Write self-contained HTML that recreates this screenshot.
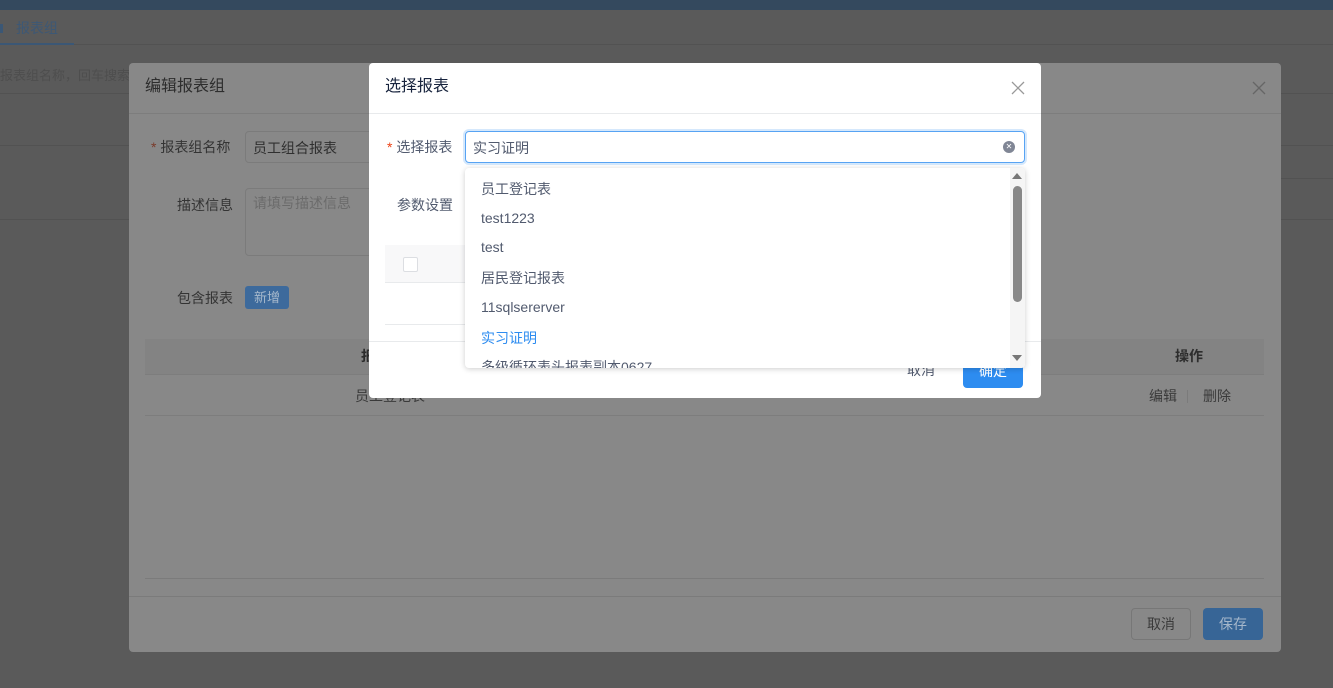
<!DOCTYPE html>
<html><head><meta charset="utf-8"><style>
*{box-sizing:border-box;margin:0;padding:0}
body{width:1333px;height:688px;overflow:hidden;background:#5a5a5a;font-family:"Liberation Sans","Noto Sans CJK SC",sans-serif;font-size:14px;position:relative;line-height:1.15}
.a{position:absolute}
</style></head><body>
<div class="a" style="left:0;top:0;width:1333px;height:10px;background:#34495e"></div>
<div class="a" style="left:0;top:44px;width:1333px;height:1px;background:#525252"></div>
<div class="a" style="left:0;top:43px;width:74px;height:2px;background:#3b5775"></div>
<div class="a" style="left:0;top:24px;width:3px;height:9px;background:#3b5775"></div>
<div class="a" style="left:16px;top:20px;color:#3d5875;font-size:14px">报表组</div>
<div class="a" style="left:0;top:69px;color:#4e4e4e;font-size:13px">报表组名称，回车搜索</div>
<div class="a" style="left:0;top:93px;width:1333px;height:1px;background:#525252"></div>
<div class="a" style="left:0;top:145px;width:1333px;height:1px;background:#525252"></div>
<div class="a" style="left:1281px;top:178px;width:52px;height:1px;background:#525252"></div>
<div class="a" style="left:0;top:219px;width:1333px;height:1px;background:#525252"></div>

<!-- outer dialog -->
<div class="a" style="left:129px;top:63px;width:1152px;height:589px;background:#888;border-radius:4px">
 <div class="a" style="left:16px;top:15px;font-size:16px;color:#2d2d2d">编辑报表组</div>
 <svg class="a" style="left:1123px;top:18px" width="14" height="14"><path d="M1 1L13 13M13 1L1 13" stroke="#666" stroke-width="1.3"/></svg>
 <div class="a" style="left:0;top:50px;width:1152px;height:1px;background:#7d7d7d"></div>
 <div class="a" style="left:22px;top:76px;color:#343434"><span style="color:#7a3a2a">*</span> 报表组名称</div>
 <div class="a" style="left:116px;top:68px;width:250px;height:32px;border:1px solid #7b7b7b;border-radius:4px;padding:8px 7px 0;color:#2f2f2f">员工组合报表</div>
 <div class="a" style="left:48px;top:134px;color:#343434">描述信息</div>
 <div class="a" style="left:116px;top:125px;width:250px;height:68px;border:1px solid #7b7b7b;border-radius:4px;padding:6px 7px;color:#6b6b6b">请填写描述信息</div>
 <div class="a" style="left:48px;top:227px;color:#343434">包含报表</div>
 <div class="a" style="left:116px;top:223px;width:44px;height:23px;background:#3d6a9c;border-radius:3px;color:#a7b9cc;font-size:13px;text-align:center;line-height:23px">新增</div>
 <div class="a" style="left:16px;top:276px;width:1119px;height:36px;background:#838383;border-bottom:1px solid #7d7d7d"></div>
 <div class="a" style="left:232px;top:285px;color:#2d2d2d;font-weight:bold">报</div>
 <div class="a" style="left:1046px;top:285px;color:#2d2d2d;font-weight:bold">操作</div>
 <div class="a" style="left:226px;top:325px;color:#3a3a3a">员工登记表</div>
 <div class="a" style="left:1020px;top:325px;color:#3a3a3a">编辑</div>
 <div class="a" style="left:1058px;top:327px;width:1px;height:13px;background:#7b7b7b"></div>
 <div class="a" style="left:1074px;top:325px;color:#3a3a3a">删除</div>
 <div class="a" style="left:16px;top:352px;width:1119px;height:1px;background:#7d7d7d"></div>
 <div class="a" style="left:16px;top:515px;width:1119px;height:1px;background:#7b7b7b"></div>
 <div class="a" style="left:0;top:533px;width:1152px;height:1px;background:#7b7b7b"></div>
 <div class="a" style="left:1002px;top:545px;width:60px;height:32px;border:1px solid #777;border-radius:4px;color:#3a3a3a;text-align:center;line-height:30px">取消</div>
 <div class="a" style="left:1074px;top:545px;width:60px;height:32px;background:#376596;border-radius:4px;color:#a5b7cb;text-align:center;line-height:32px">保存</div>
</div>

<!-- inner dialog -->
<div class="a" style="left:369px;top:63px;width:672px;height:335px;background:#fff;border-radius:4px">
 <div class="a" style="left:16px;top:15px;font-size:16px;color:#17233d">选择报表</div>
 <svg class="a" style="left:642px;top:18px" width="14" height="14"><path d="M1 1L13 13M13 1L1 13" stroke="#999" stroke-width="1.3"/></svg>
 <div class="a" style="left:0;top:50px;width:672px;height:1px;background:#e8eaec"></div>
 <div class="a" style="left:18px;top:76px;color:#515a6e"><span style="color:#ed4014">*</span> 选择报表</div>
 <div class="a" style="left:96px;top:68px;width:560px;height:32px;border:1px solid #57a3f3;border-radius:4px;box-shadow:0 0 0 2px rgba(45,140,240,.2);padding:8px 7px 0;color:#515a6e">实习证明</div>
 <div class="a" style="left:634px;top:78px;width:12px;height:12px;border-radius:50%;background:#808695;color:#fff;font-size:8px;text-align:center;line-height:12px">✕</div>
 <div class="a" style="left:28px;top:134px;color:#515a6e">参数设置</div>
 <div class="a" style="left:16px;top:182px;width:640px;height:38px;background:#f8f8f9;border-bottom:1px solid #e8eaec"></div>
 <div class="a" style="left:34px;top:194px;width:15px;height:15px;border:1px solid #dcdee2;border-radius:2px;background:#fff"></div>
 <div class="a" style="left:16px;top:261px;width:640px;height:1px;background:#e8eaec"></div>
 <div class="a" style="left:0;top:278px;width:672px;height:1px;background:#e8eaec"></div>
 <div class="a" style="left:538px;top:299px;color:#515a6e">取消</div>
 <div class="a" style="left:594px;top:293px;width:60px;height:32px;background:#2d8cf0;border-radius:4px;color:#fff;text-align:center;line-height:30px">确定</div>
</div>

<!-- dropdown -->
<div class="a" style="left:465px;top:168px;width:560px;height:200px;background:#fff;box-shadow:0 1px 6px rgba(0,0,0,.2);border-radius:4px;overflow:hidden;color:#515a6e">
 <div class="a" style="left:16px;top:13px">员工登记表</div>
 <div class="a" style="left:16px;top:42px">test1223</div>
 <div class="a" style="left:16px;top:71px">test</div>
 <div class="a" style="left:16px;top:102px">居民登记报表</div>
 <div class="a" style="left:16px;top:131px">11sqlsererver</div>
 <div class="a" style="left:16px;top:162px;color:#2d8cf0">实习证明</div>
 <div class="a" style="left:16px;top:191px">多级循环表头报表副本0627</div>
 <div class="a" style="left:545px;top:0;width:15px;height:200px;background:#f5f5f5"></div>
 <div class="a" style="left:548px;top:18px;width:9px;height:116px;background:#888;border-radius:5px"></div>
 <div class="a" style="left:547px;top:5px;width:0;height:0;border-left:5px solid transparent;border-right:5px solid transparent;border-bottom:6px solid #777"></div>
 <div class="a" style="left:547px;top:187px;width:0;height:0;border-left:5px solid transparent;border-right:5px solid transparent;border-top:6px solid #777"></div>
</div>
</body></html>
